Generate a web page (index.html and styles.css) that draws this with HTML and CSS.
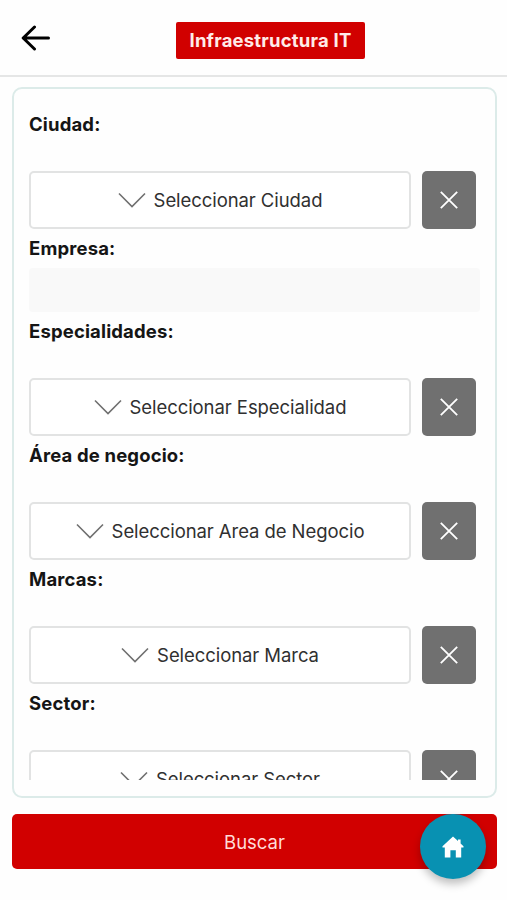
FILE: index.html
```html
<!DOCTYPE html>
<html lang="es">
<head>
<meta charset="utf-8">
<title>Infraestructura IT</title>
<link rel="stylesheet" href="styles.css">
</head>
<body>
<svg class="defs" width="0" height="0" aria-hidden="true">
  <symbol id="chevron" viewBox="0 0 28 16"><path d="M1 1.5 14 14.5 27 1.5"/></symbol>
  <symbol id="cross" viewBox="0 0 20 20"><path d="M1.8 1.8 18.2 18.2M18.2 1.8 1.8 18.2"/></symbol>
</svg>
<header class="header">
  <button class="back" aria-label="Volver"><svg width="30" height="26" viewBox="0 0 30 26"><path d="M13.5 2 2.2 13 13.5 24M2.2 13H27.5"/></svg></button>
  <h1 class="title">Infraestructura IT</h1>
</header>
<main class="panel">
  <div class="scroll">
    <section class="field">
      <h2 class="label">Ciudad:</h2>
      <div class="row">
        <button class="select"><svg class="chevron"><use href="#chevron"/></svg><span>Seleccionar Ciudad</span></button>
        <button class="clear" aria-label="Borrar"><svg class="cross"><use href="#cross"/></svg></button>
      </div>
    </section>
    <section class="field field-input">
      <h2 class="label">Empresa:</h2>
      <input class="input" type="text">
    </section>
    <section class="field">
      <h2 class="label">Especialidades:</h2>
      <div class="row">
        <button class="select"><svg class="chevron"><use href="#chevron"/></svg><span>Seleccionar Especialidad</span></button>
        <button class="clear" aria-label="Borrar"><svg class="cross"><use href="#cross"/></svg></button>
      </div>
    </section>
    <section class="field">
      <h2 class="label">Área de negocio:</h2>
      <div class="row">
        <button class="select"><svg class="chevron"><use href="#chevron"/></svg><span>Seleccionar Area de Negocio</span></button>
        <button class="clear" aria-label="Borrar"><svg class="cross"><use href="#cross"/></svg></button>
      </div>
    </section>
    <section class="field">
      <h2 class="label">Marcas:</h2>
      <div class="row">
        <button class="select"><svg class="chevron"><use href="#chevron"/></svg><span>Seleccionar Marca</span></button>
        <button class="clear" aria-label="Borrar"><svg class="cross"><use href="#cross"/></svg></button>
      </div>
    </section>
    <section class="field">
      <h2 class="label">Sector:</h2>
      <div class="row">
        <button class="select"><svg class="chevron"><use href="#chevron"/></svg><span>Seleccionar Sector</span></button>
        <button class="clear" aria-label="Borrar"><svg class="cross"><use href="#cross"/></svg></button>
      </div>
    </section>
  </div>
</main>
<button class="search">Buscar</button>
<button class="home" aria-label="Inicio"><svg width="22" height="22" viewBox="0 0 22 22"><path d="M11 0.5 16 5V3.4H18.6V7.4L21.5 10.2V11.4H19.2V21.5H13.8V14.2H8.4V21.5H2.8V11.4H.5V10.2Z"/></svg></button>
</body>
</html>
```

FILE: styles.css
```css
* {
  box-sizing: border-box;
}

body {
  margin: 0;
  height: 900px;
  overflow: hidden;
  background: #fefefe;
  color: #151515;
  font-family: Inter, "Liberation Sans", sans-serif;
  font-size: 18.5px;
}

button {
  margin: 0;
  padding: 0;
  border: 0;
  background: none;
  color: inherit;
  font: inherit;
}

svg {
  display: block;
  flex: none;
}

.defs {
  position: absolute;
}

.header {
  display: flex;
  align-items: flex-start;
  height: 77px;
  padding: 22px 0 0 21px;
  border-bottom: 2px solid #e5e6e6;
}

.back {
  width: 30px;
  margin: 3px 125px 0 0;
}

.back path {
  fill: none;
  stroke: #000;
  stroke-width: 3;
  stroke-linecap: round;
  stroke-linejoin: round;
}

.title {
  width: 189px;
  height: 37px;
  margin: 0;
  border-radius: 2px;
  background: #d10000;
  color: #ffebe8;
  font-size: 18.5px;
  font-weight: 700;
  letter-spacing: 0.2px;
  line-height: 37px;
  text-align: center;
  white-space: nowrap;
}

.panel {
  width: 485px;
  height: 711px;
  margin: 10px 0 0 12px;
  padding: 22px 14px 16px 15px;
  border: 2px solid #dcebe9;
  border-radius: 10px;
}

.scroll {
  height: 669px;
  overflow: hidden;
}

.field {
  height: 124px;
}

.field-input {
  height: 83px;
}

.label {
  height: 26px;
  margin: 0;
  font-size: 18.5px;
  font-weight: 700;
  letter-spacing: 0.15px;
  line-height: 26px;
}

.row {
  display: flex;
  gap: 11px;
  padding-top: 34px;
}

.select {
  display: flex;
  align-items: center;
  justify-content: center;
  gap: 8px;
  width: 382px;
  height: 58px;
  border: 2px solid #e2e3e3;
  border-radius: 5px;
  background: #fff;
  color: #303030;
  letter-spacing: -0.07px;
  white-space: nowrap;
}

.chevron {
  width: 28px;
  height: 16px;
  fill: none;
  stroke: #707070;
  stroke-width: 1.6;
}

.clear {
  display: flex;
  align-items: center;
  justify-content: center;
  width: 54px;
  height: 58px;
  border-radius: 5px;
  background: #707070;
}

.cross {
  width: 20px;
  height: 20px;
  fill: none;
  stroke: #fff;
  stroke-width: 1.8;
}

.input {
  display: block;
  width: 451px;
  height: 44px;
  margin-top: 7px;
  border: 0;
  border-radius: 4px;
  background: #f9f9f9;
}

.search {
  display: block;
  width: 485px;
  height: 55px;
  margin: 16px 0 0 12px;
  border-radius: 5px;
  background: #d10000;
  color: #ffdcd8;
}

.home {
  position: fixed;
  top: 814px;
  left: 420px;
  display: flex;
  align-items: center;
  justify-content: center;
  width: 66px;
  height: 65px;
  border-radius: 50%;
  background: #0891b2;
  box-shadow: 0 5px 9px rgba(0, 0, 0, 0.25);
}

.home path {
  fill: #fff;
}
```
